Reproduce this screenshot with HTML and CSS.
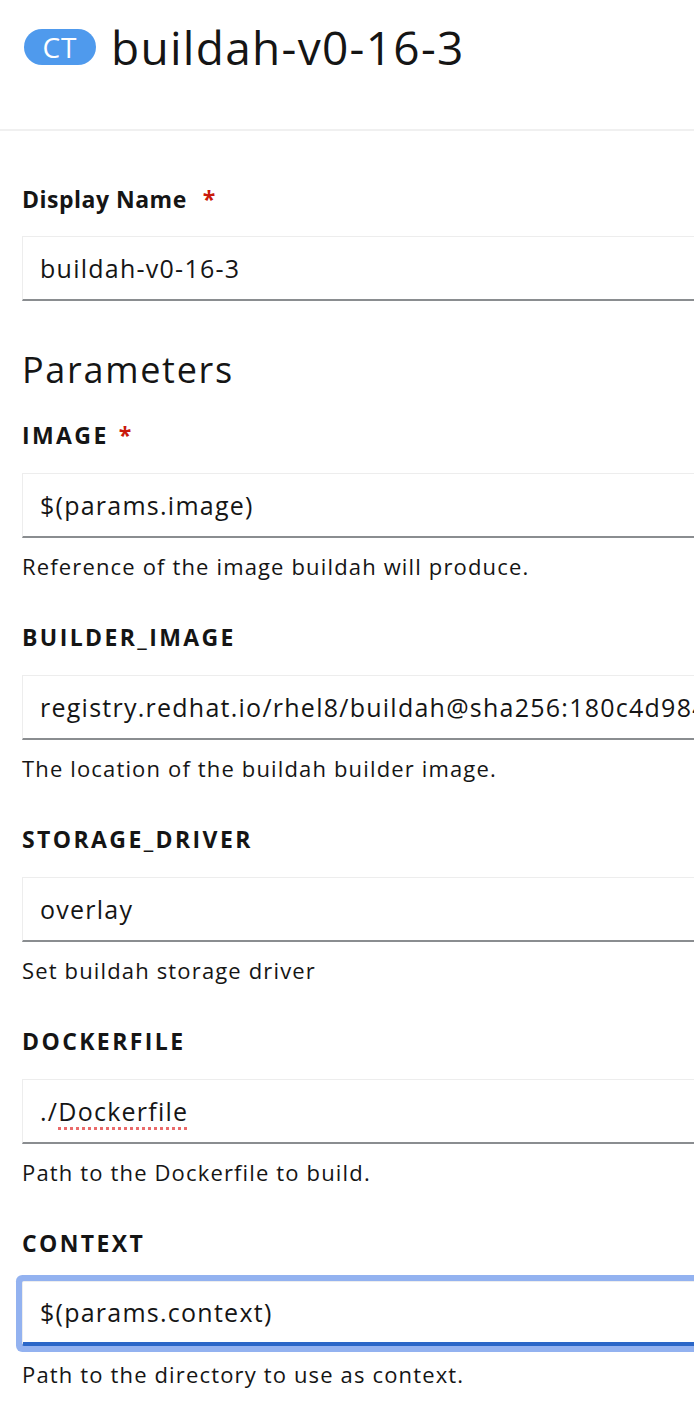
FILE: index.html
```html
<!DOCTYPE html>
<html lang="en">
<head>
<meta charset="utf-8">
<title>buildah-v0-16-3</title>
<link rel="stylesheet" href="styles.css">
</head>
<body>
<header class="page-header">
  <div class="title-row">
    <span class="badge">CT</span>
    <h1 class="title">buildah-v0-16-3</h1>
  </div>
</header>
<main class="form">
  <div class="group group-first">
    <label class="label">Display Name<span class="req">*</span></label>
    <div class="field">buildah-v0-16-3</div>
  </div>

  <h2 class="section-title">Parameters</h2>

  <div class="group">
    <label class="label label-param">IMAGE<span class="req">*</span></label>
    <div class="field">$(params.image)</div>
    <p class="help">Reference of the image buildah will produce.</p>
  </div>

  <div class="group">
    <label class="label label-param">BUILDER_IMAGE</label>
    <div class="field">registry.redhat.io/rhel8/buildah@sha256:180c4d9849b6ab0e5465d30d4f3a77765cf0d852ca1cb1efb59d6e8c9f90d467</div>
    <p class="help">The location of the buildah builder image.</p>
  </div>

  <div class="group">
    <label class="label label-param">STORAGE_DRIVER</label>
    <div class="field">overlay</div>
    <p class="help">Set buildah storage driver</p>
  </div>

  <div class="group">
    <label class="label label-param">DOCKERFILE</label>
    <div class="field">./<span class="spell">Dockerfile</span></div>
    <p class="help">Path to the Dockerfile to build.</p>
  </div>

  <div class="group">
    <label class="label label-param">CONTEXT</label>
    <div class="field field-focus">$(params.context)</div>
    <p class="help">Path to the directory to use as context.</p>
  </div>
</main>
</body>
</html>
```

FILE: styles.css
```css
html, body {
  margin: 0;
  padding: 0;
  background: #ffffff;
  overflow: hidden;
}

body {
  font-family: "Open Sans", "Noto Sans", sans-serif;
  color: #151515;
}

.page-header {
  height: 109px;
  padding: 20px 22px 0;
  border-bottom: 2px solid #f0f0f0;
}

.title-row {
  display: flex;
  align-items: center;
  height: 54px;
  gap: 15px;
}

.badge {
  display: inline-flex;
  align-items: center;
  justify-content: center;
  width: 72px;
  height: 36px;
  border-radius: 18px;
  background: #4f9aed;
  color: #ffffff;
  font-size: 28px;
  font-weight: 500;
  letter-spacing: 1px;
  margin-left: 2px;
}

.title {
  margin: 0;
  font-size: 46px;
  font-weight: 500;
  line-height: 54px;
  letter-spacing: 1.3px;
}

.form {
  padding: 0 0 0 22px;
}

.group {
  display: flex;
  flex-direction: column;
  margin-bottom: 43px;
}

.group-first {
  margin-top: 54px;
  margin-bottom: 0;
}

.group-first .label {
  margin-bottom: 23px;
}

.label {
  display: block;
  font-size: 23px;
  font-weight: 700;
  line-height: 28px;
  height: 28px;
  margin-bottom: 24px;
  letter-spacing: 0.5px;
}

.req {
  color: #c9190b;
  margin-left: 16px;
  letter-spacing: 0;
}

.label-param {
  letter-spacing: 2.4px;
}

.label-param .req {
  margin-left: 10px;
}

.field {
  box-sizing: border-box;
  width: 720px;
  height: 65px;
  padding: 0 17px;
  border: 1px solid #ededed;
  border-bottom: 2px solid #8a8d90;
  font-size: 25px;
  line-height: 62px;
  white-space: nowrap;
  overflow: hidden;
  letter-spacing: 1.25px;
  background: #ffffff;
}

.field-focus {
  border-radius: 2px;
  border-bottom: 4px solid #2b67c8;
  line-height: 60px;
  box-shadow: 0 0 0 6px #93b2f0;
}

.spell {
  text-decoration-line: underline;
  text-decoration-style: dotted;
  text-decoration-color: #ea6a6a;
  text-decoration-thickness: 3px;
  text-underline-offset: 6px;
}

.help {
  margin: 14px 0 0;
  font-size: 22px;
  line-height: 28px;
  letter-spacing: 1.15px;
}

.section-title {
  margin: 47px 0 29px;
  font-size: 36px;
  font-weight: 500;
  line-height: 44px;
  letter-spacing: 1.7px;
}
```
